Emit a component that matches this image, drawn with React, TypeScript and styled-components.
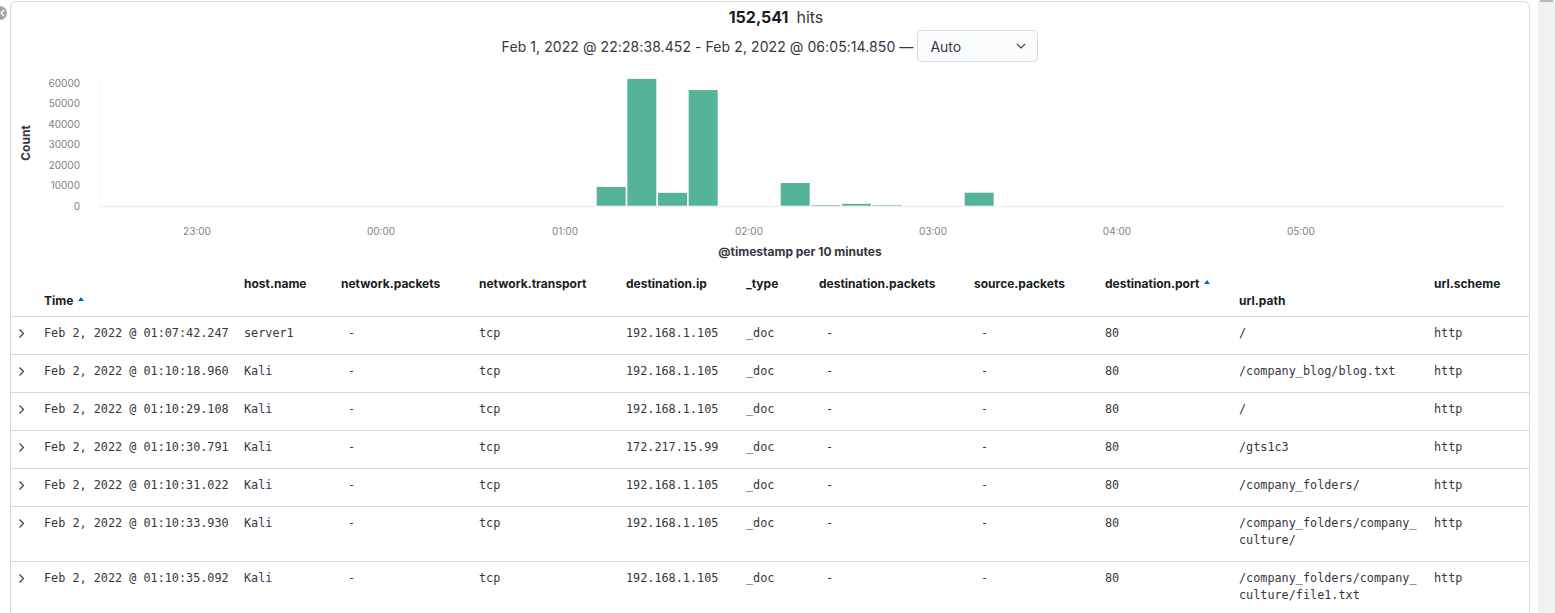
import React from "react";
import styled, { createGlobalStyle } from "styled-components";

const GlobalStyle = createGlobalStyle`
  html, body { margin: 0; padding: 0; background: #ffffff; overflow: hidden; }
  body { font-family: Inter, "Noto Sans", sans-serif; color: #343741; }
`;

const Page = styled.div`
  display: flex;
  align-items: flex-start;
  height: 613px;
  overflow: hidden;
`;

const Gutter = styled.div`
  flex: none;
  width: 10px;
  height: 100%;
  position: relative;
`;

const CollapseToggle = styled.div`
  position: absolute;
  left: -7px;
  top: 6px;
  width: 14px;
  height: 14px;
  border-radius: 50%;
  background: #a2a6ad;
  display: flex;
  align-items: center;
  justify-content: flex-end;
  padding-right: 2px;
  box-sizing: border-box;
`;

const Panel = styled.div`
  flex: none;
  width: 1520px;
  min-height: 700px;
  margin-top: 1px;
  box-sizing: border-box;
  border: 1px solid #d3dae6;
  border-radius: 6px 6px 0 0;
  background: #ffffff;
  display: flex;
  flex-direction: column;
`;

const Spacer = styled.div`
  flex: none;
  width: 8px;
`;

const ScrollTrack = styled.div`
  flex: none;
  width: 17px;
  height: 100%;
  background: #f1f1f1;
  display: flex;
  justify-content: center;
`;

const ScrollThumb = styled.div`
  width: 13px;
  height: 2px;
  background: #b9b9b9;
`;

const HitsLine = styled.div`
  margin-top: 5px;
  padding-left: 12px;
  text-align: center;
  font-size: 16px;
  line-height: 20px;
  color: #343741;
`;

const HitsCount = styled.strong`
  font-weight: 700;
  color: #1a1c21;
  margin-right: 8px;
`;

const DateRow = styled.div`
  margin-top: 3px;
  display: flex;
  justify-content: center;
  align-items: center;
  gap: 4px;
  font-size: 14px;
  letter-spacing: 0.08px;
  color: #343741;
  height: 32px;
`;

const IntervalSelect = styled.div`
  width: 121px;
  height: 32px;
  box-sizing: border-box;
  border: 1px solid #d6dce6;
  border-radius: 4px;
  background: #fbfcfd;
  display: flex;
  align-items: center;
  justify-content: space-between;
  padding: 0 11px 0 12px;
  font-size: 14px;
  letter-spacing: 0;
  color: #343741;
`;

const ChartSvg = styled.svg`
  display: block;
  margin-top: 4px;
  flex: none;
`;

const Table = styled.table`
  width: 100%;
  table-layout: fixed;
  border-collapse: collapse;
`;

const HeadCell = styled.th<{ $low?: boolean }>`
  box-sizing: border-box;
  height: 54px;
  padding: 13px 8px 7px 0;
  text-align: left;
  vertical-align: ${(p) => (p.$low ? "bottom" : "top")};
  font-size: 12px;
  line-height: 17px;
  font-weight: 700;
  color: #1a1c21;
  border-bottom: 1px solid #d3dae6;
  white-space: nowrap;
`;

const SortArrow = styled.span`
  display: inline-block;
  margin-left: 5px;
  vertical-align: 4px;
  width: 0;
  height: 0;
  border-left: 3.5px solid transparent;
  border-right: 3.5px solid transparent;
  border-bottom: 4px solid #006bb4;
`;

const BodyRow = styled.tr`
  border-bottom: 1px solid #d3dae6;
`;

const Cell = styled.td<{ $wrap?: boolean }>`
  padding: 8.5px 12px 11.5px 0;
  vertical-align: top;
  font-family: "DejaVu Sans Mono", "Liberation Mono", monospace;
  font-size: 11.8px;
  line-height: 17px;
  color: #343741;
  word-break: ${(p) => (p.$wrap ? "break-all" : "normal")};
  white-space: ${(p) => (p.$wrap ? "normal" : "nowrap")};
`;

const ExpandCell = styled.td`
  padding: 8.5px 0 11.5px 7px;
  vertical-align: top;
  line-height: 17px;
`;

const Chevron = () => (
  <svg width="8" height="17" viewBox="0 0 8 17" style={{ display: "block" }}>
    <polyline points="1.5,4.5 5.5,8.5 1.5,12.5" fill="none" stroke="#343741" strokeWidth="1.1" />
  </svg>
);

const ChevronDown = () => (
  <svg width="10" height="6" viewBox="0 0 10 6">
    <polyline points="0.8,0.8 5,5 9.2,0.8" fill="none" stroke="#343741" strokeWidth="1.1" />
  </svg>
);

const BAR = "#54b399";
const HOUR = 184;
const X01 = 554; // x of 01:00 in chart coords
const BASE = 139.7;
const SCALE = 123 / 60000;

const buckets: { k: number; v: number }[] = [
  { k: 1, v: 9150 },
  { k: 2, v: 61870 },
  { k: 3, v: 6270 },
  { k: 4, v: 56410 },
  { k: 7, v: 11060 },
  { k: 8, v: 300 },
  { k: 9, v: 900 },
  { k: 10, v: 250 },
  { k: 13, v: 6351 },
];

const xLabels = ["23:00", "00:00", "01:00", "02:00", "03:00", "04:00", "05:00"];

const Chart = () => (
  <ChartSvg width={1518} height={196} viewBox="0 0 1518 196">
    <g fontFamily="Inter, sans-serif" fontSize="10" fill="#7d818a">
      {[0, 10000, 20000, 30000, 40000, 50000, 60000].map((v) => (
        <text key={v} x={69} y={BASE - v * SCALE} textAnchor="end" dominantBaseline="central">
          {v}
        </text>
      ))}
      {xLabels.map((l, i) => (
        <text key={l} x={X01 + (i - 2) * HOUR} y={165} textAnchor="middle" dominantBaseline="central">
          {l}
        </text>
      ))}
    </g>
    <text
      transform="translate(14,77) rotate(-90)"
      textAnchor="middle"
      dominantBaseline="central"
      fontFamily="Inter, sans-serif"
      fontSize="12"
      fontWeight="700"
      fill="#343741"
    >
      Count
    </text>
    <line x1={89.5} y1={14} x2={89.5} y2={140} stroke="#f3f5f8" strokeWidth="1" />
    <line x1={89} y1={140.5} x2={1494} y2={140.5} stroke="#eef0f3" strokeWidth="1.5" />
    {buckets.map((b) => {
      const h = b.v * SCALE;
      return (
        <rect
          key={b.k}
          x={X01 + (b.k * HOUR) / 6 + 1}
          y={BASE - h}
          width={29}
          height={h}
          fill={BAR}
        />
      );
    })}
    <text
      x={789}
      y={185}
      textAnchor="middle"
      dominantBaseline="central"
      fontFamily="Inter, sans-serif"
      fontSize="12"
      fontWeight="700"
      fill="#343741"
    >
      @timestamp per 10 minutes
    </text>
  </ChartSvg>
);

type Col = { key: string; label: string; width: number; low?: boolean; sort?: boolean; wrap?: boolean };

const columns: Col[] = [
  { key: "time", label: "Time", width: 200, low: true, sort: true },
  { key: "host", label: "host.name", width: 97 },
  { key: "netPackets", label: "network.packets", width: 138 },
  { key: "transport", label: "network.transport", width: 147 },
  { key: "destIp", label: "destination.ip", width: 120 },
  { key: "type", label: "_type", width: 73 },
  { key: "destPackets", label: "destination.packets", width: 155 },
  { key: "srcPackets", label: "source.packets", width: 131 },
  { key: "destPort", label: "destination.port", width: 134, sort: true },
  { key: "urlPath", label: "url.path", width: 195, low: true, wrap: true },
  { key: "scheme", label: "url.scheme", width: 95 },
];

const DASH = "\u00a0-";

const mk = (time: string, host: string, ip: string, path: string): Record<string, string> => ({
  time: `Feb 2, 2022 @ ${time}`,
  host,
  netPackets: DASH,
  transport: "tcp",
  destIp: ip,
  type: "_doc",
  destPackets: DASH,
  srcPackets: DASH,
  destPort: "80",
  urlPath: path,
  scheme: "http",
});

const rows = [
  mk("01:07:42.247", "server1", "192.168.1.105", "/"),
  mk("01:10:18.960", "Kali", "192.168.1.105", "/company_blog/blog.txt"),
  mk("01:10:29.108", "Kali", "192.168.1.105", "/"),
  mk("01:10:30.791", "Kali", "172.217.15.99", "/gts1c3"),
  mk("01:10:31.022", "Kali", "192.168.1.105", "/company_folders/"),
  mk("01:10:33.930", "Kali", "192.168.1.105", "/company_folders/company_culture/"),
  mk("01:10:35.092", "Kali", "192.168.1.105", "/company_folders/company_culture/file1.txt"),
];

export default function App() {
  return (
    <>
      <GlobalStyle />
      <Page>
        <Gutter>
          <CollapseToggle>
            <svg width="5" height="8" viewBox="0 0 5 8">
              <polyline points="4,1 1.2,4 4,7" fill="none" stroke="#ffffff" strokeWidth="1.4" />
            </svg>
          </CollapseToggle>
        </Gutter>
        <Panel>
          <HitsLine>
            <HitsCount>152,541</HitsCount>hits
          </HitsLine>
          <DateRow>
            <span>Feb 1, 2022 @ 22:28:38.452 - Feb 2, 2022 @ 06:05:14.850 —</span>
            <IntervalSelect>
              <span>Auto</span>
              <ChevronDown />
            </IntervalSelect>
          </DateRow>
          <Chart />
          <Table>
            <colgroup>
              <col style={{ width: 33 }} />
              {columns.map((c) => (
                <col key={c.key} style={{ width: c.width }} />
              ))}
            </colgroup>
            <thead>
              <tr>
                <HeadCell />
                {columns.map((c) => (
                  <HeadCell key={c.key} $low={c.low}>
                    {c.label}
                    {c.sort && <SortArrow />}
                  </HeadCell>
                ))}
              </tr>
            </thead>
            <tbody>
              {rows.map((r, i) => (
                <BodyRow key={i}>
                  <ExpandCell>
                    <Chevron />
                  </ExpandCell>
                  {columns.map((c) => (
                    <Cell key={c.key} $wrap={c.wrap}>
                      {r[c.key]}
                    </Cell>
                  ))}
                </BodyRow>
              ))}
            </tbody>
          </Table>
        </Panel>
        <Spacer />
        <ScrollTrack>
          <ScrollThumb />
        </ScrollTrack>
      </Page>
    </>
  );
}
